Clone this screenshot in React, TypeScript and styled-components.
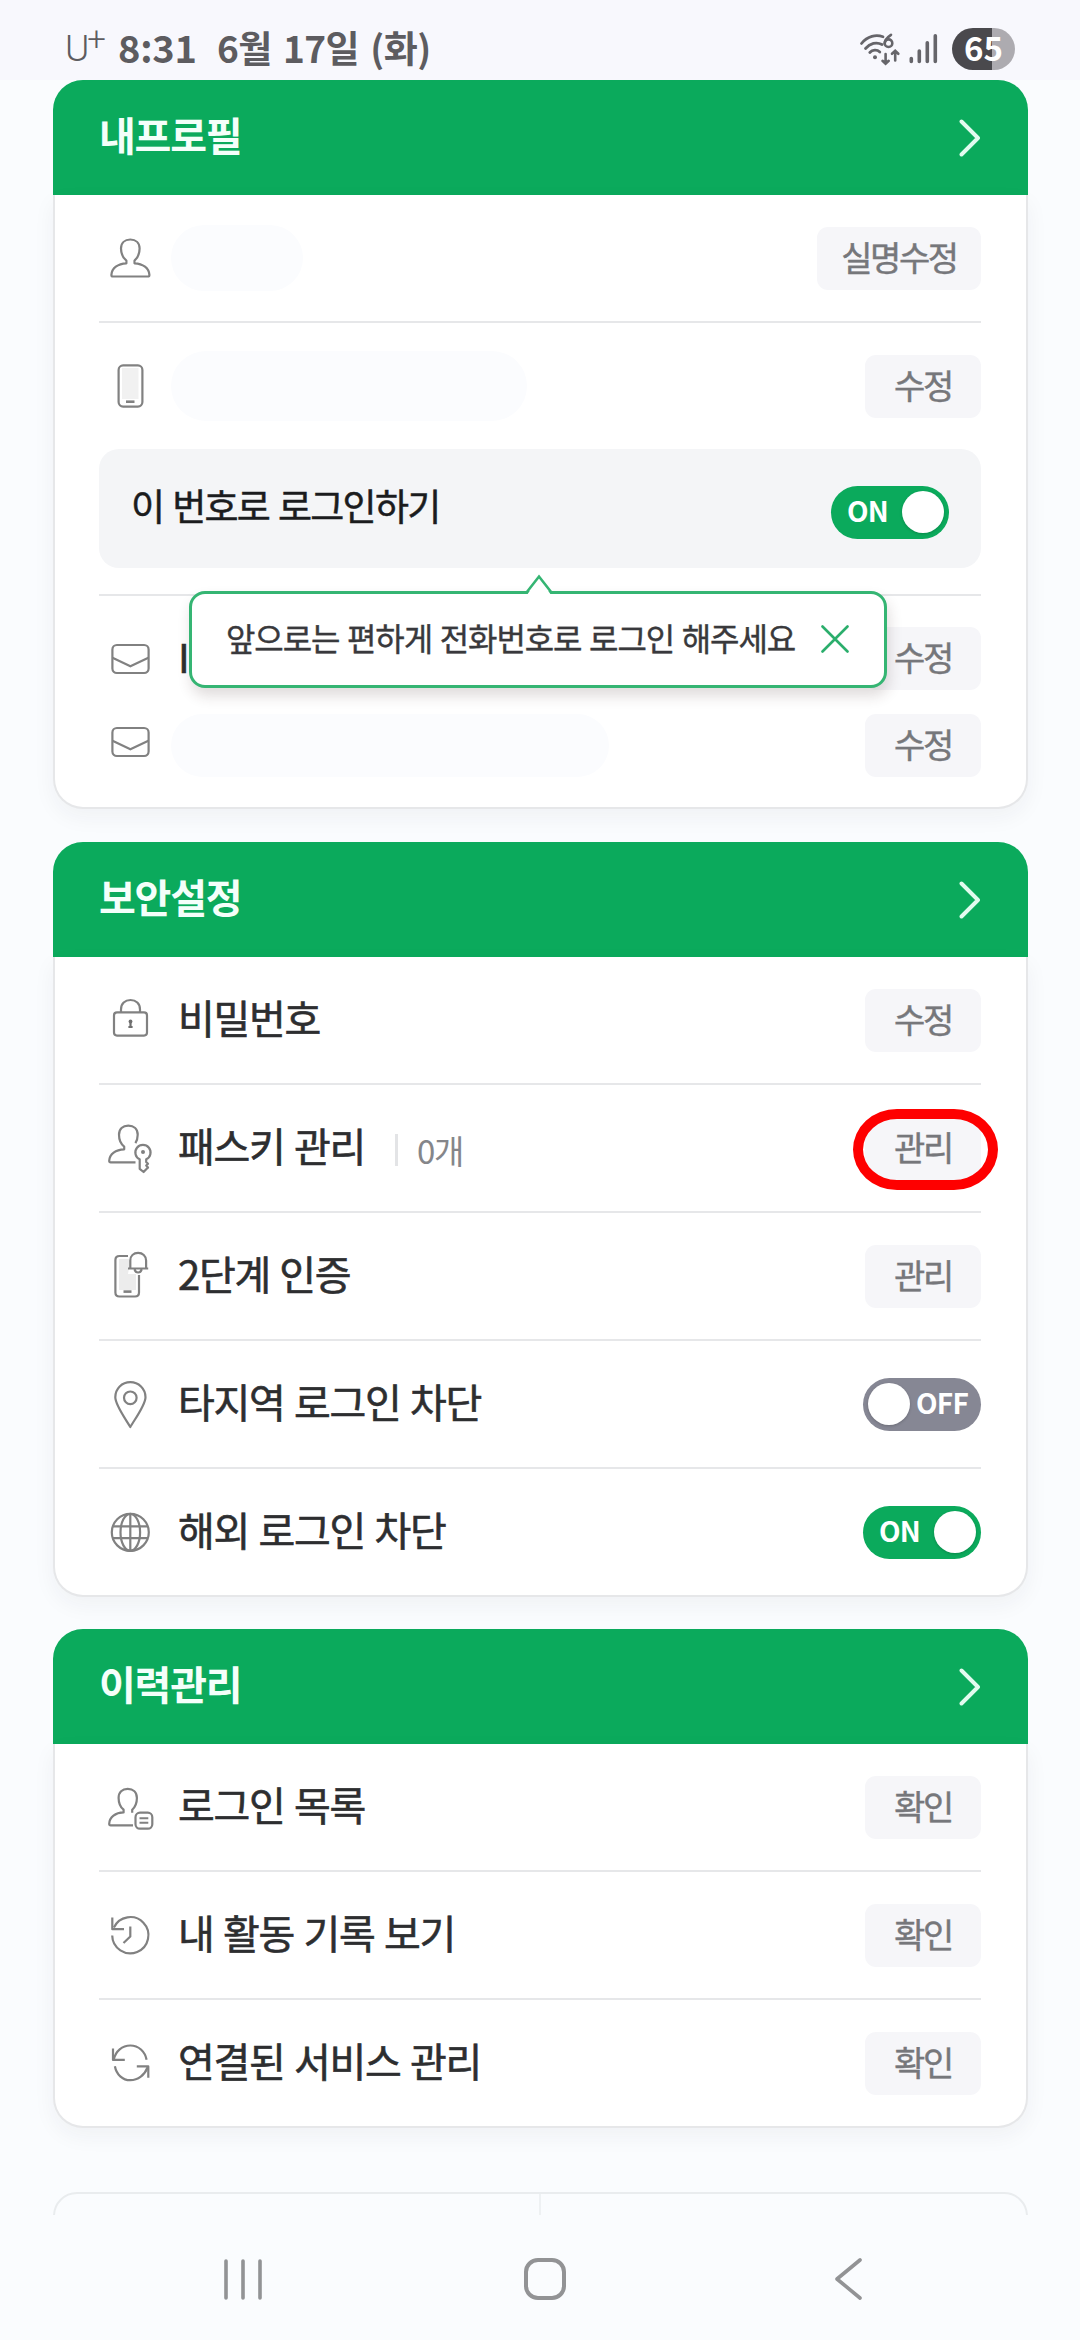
import React from "react";
import styled, { createGlobalStyle } from "styled-components";

const GREEN = "#0baa5c";
const LINE = "#e6e7e9";

const GlobalStyle = createGlobalStyle`
  * { box-sizing: border-box; }
  html, body { margin: 0; padding: 0; background: #fafcfe; }
  body { font-family: "Noto Sans CJK KR", "Noto Sans", sans-serif; }
`;

const Screen = styled.div`
  width: 1080px;
  height: 2340px;
  overflow: hidden;
  display: flex;
  flex-direction: column;
  background: #fafcfe;
`;

/* ---------- status bar ---------- */

const StatusBar = styled.header`
  height: 80px;
  flex: none;
  display: flex;
  align-items: center;
  justify-content: space-between;
  padding: 17px 65px 0 65px;
  background: #f8f8fd;
  color: #5d5c60;
`;

const StatusLeft = styled.div`
  display: flex;
  align-items: center;
  height: 60px;
  margin-bottom: 3px;
`;

const Carrier = styled.span`
  display: flex;
  width: 53px;
  padding-top: 3px;
  font-family: Roboto, sans-serif;
  font-weight: 300;
  font-size: 37px;
  line-height: 60px;
`;

const CarrierPlus = styled.span`
  font-size: 33px;
  line-height: 40px;
  margin-left: -2px;
`;

const Clock = styled.span`
  width: 99px;
  font-weight: 700;
  font-size: 38px;
  line-height: 60px;
  letter-spacing: -0.2px;
`;

const DateText = styled(Clock)`
  width: auto;
  font-size: 37px;
  letter-spacing: -0.6px;
  word-spacing: 3.6px;
`;

const StatusRight = styled.div`
  display: flex;
  align-items: center;
  height: 42px;
`;

const SignalGap = styled.span`
  width: 7px;
`;

const Battery = styled.div`
  display: flex;
  align-items: center;
  justify-content: center;
  width: 63px;
  height: 42px;
  margin-left: 14px;
  padding-bottom: 3px;
  border-radius: 21px;
  background: linear-gradient(90deg, #4a494d 0 40px, #adabb0 40px 100%);
  color: #fff;
  font-weight: 700;
  font-size: 33px;
  line-height: 38px;
`;

/* ---------- cards ---------- */

const List = styled.main`
  flex: none;
  height: 2135px;
  overflow: hidden;
  display: flex;
  flex-direction: column;
  padding: 0 52px 0 53px;
`;

const Card = styled.section<{ $gap: number }>`
  flex: none;
  margin-bottom: ${(p) => p.$gap}px;
  border-radius: 30px;
`;

const CardHeader = styled.div`
  display: flex;
  align-items: center;
  justify-content: space-between;
  height: 115px;
  padding: 0 47px 0 46px;
  border-radius: 30px 30px 0 0;
  background: ${GREEN};
`;

const CardTitle = styled.h2`
  margin: 0 0 7px;
  color: #f4fffa;
  font-size: 40px;
  font-weight: 700;
  line-height: 60px;
  letter-spacing: -1.2px;
`;

const CardBody = styled.div`
  padding: 0 45px 0 44px;
  border: 2px solid ${LINE};
  border-top: 0;
  border-radius: 0 0 30px 30px;
  background: #fff;
  box-shadow: 0 8px 22px rgba(30, 40, 60, 0.05);
`;

const Row = styled.div<{ $h?: number; $last?: boolean }>`
  display: flex;
  align-items: center;
  height: ${(p) => p.$h ?? 128}px;
  border-bottom: ${(p) => (p.$last ? "0" : `2px solid ${LINE}`)};
`;

const IconSlot = styled.span<{ $lift?: number }>`
  display: flex;
  justify-content: center;
  width: 62px;
  margin-bottom: ${(p) => p.$lift ?? 0}px;
  svg { display: block; overflow: visible; }
`;

const Label = styled.span`
  margin: 0 0 6px 17px;
  color: #2d2e30;
  font-size: 40px;
  font-weight: 400;
  -webkit-text-stroke: 0.6px #2d2e30;
  line-height: 60px;
  letter-spacing: -1.3px;
  word-spacing: 1.8px;
  white-space: nowrap;
`;

const Redacted = styled.span<{ $w: number; $h: number }>`
  width: ${(p) => p.$w}px;
  height: ${(p) => p.$h}px;
  margin-left: 10px;
  border-radius: 36px;
  background: #fbfcfe;
`;

const Count = styled.span`
  display: flex;
  align-items: center;
  margin-left: 30px;
  padding-top: 4px;
  color: #85868a;
  font-size: 33px;
  font-weight: 400;
  line-height: 32px;
  letter-spacing: -1.3px;
  &::before {
    content: "";
    width: 3px;
    height: 32px;
    margin-right: 19px;
    background: #e3e4e6;
  }
`;

const Spacer = styled.span`
  flex: 1;
`;

const Button = styled.button<{ $wide?: boolean }>`
  position: relative;
  width: ${(p) => (p.$wide ? 164 : 116)}px;
  height: 63px;
  padding: 0 0 3px;
  border: 0;
  border-radius: 11px;
  background: #f6f6f9;
  color: #76777b;
  font-family: inherit;
  font-size: 34px;
  font-weight: 400;
  -webkit-text-stroke: 0.45px #76777b;
  line-height: 58px;
  letter-spacing: -2.4px;
  text-align: center;
  white-space: nowrap;
`;

const Ring = styled.span`
  position: absolute;
  left: -12px;
  top: -8px;
  width: 145px;
  height: 81px;
  border: 10px solid #fe0000;
  border-radius: 44px / 40.5px;
`;

const Toggle = styled.span<{ $on: boolean }>`
  display: flex;
  align-items: center;
  justify-content: space-between;
  flex-direction: ${(p) => (p.$on ? "row" : "row-reverse")};
  width: 118px;
  height: 53px;
  padding: ${(p) => (p.$on ? "0 5px 0 16px" : "0 13px 0 5px")};
  border-radius: 27px;
  background: ${(p) => (p.$on ? GREEN : "#868794")};
  color: #fff;
  font-size: 28px;
  font-weight: 700;
  line-height: 48px;
  letter-spacing: -0.8px;
`;

const ToggleText = styled.span`
  padding-bottom: 5px;
`;

const Knob = styled.span`
  width: 42px;
  height: 42px;
  border-radius: 50%;
  background: #fff;
  box-shadow: 0 1px 3px rgba(0, 0, 0, 0.2);
`;

const LoginBlock = styled.div`
  padding-bottom: 26px;
  border-bottom: 2px solid ${LINE};
`;

const LoginBox = styled.div`
  position: relative;
  display: flex;
  align-items: center;
  justify-content: space-between;
  height: 119px;
  padding: 7px 32px 0 32px;
  border-radius: 20px;
  background: #f4f5f7;
`;

const LoginLabel = styled.span`
  margin-bottom: 14px;
  color: #1b1c1e;
  font-size: 37px;
  -webkit-text-stroke: 0.5px #1b1c1e;
  line-height: 56px;
  letter-spacing: -1.7px;
  word-spacing: 2.2px;
`;

const Tooltip = styled.div`
  position: absolute;
  z-index: 2;
  left: 90px;
  top: 142px;
  width: 698px;
  height: 97px;
  display: flex;
  align-items: center;
  padding: 0 0 0 34px;
  border: 3px solid #35b573;
  border-radius: 16px;
  background: #fff;
  box-shadow: 2px 8px 14px rgba(60, 40, 40, 0.16);
  > svg { display: block; margin-bottom: 2px; }
`;

const TooltipText = styled.span`
  width: 595px;
  margin-bottom: 5px;
  color: #39393c;
  font-size: 32px;
  -webkit-text-stroke: 0.4px #39393c;
  line-height: 48px;
  letter-spacing: -1.1px;
  word-spacing: 1.6px;
  white-space: nowrap;
`;

const Arrow = styled.span`
  position: absolute;
  left: 333px;
  top: -20px;
  width: 28px;
  height: 21px;
  svg { display: block; }
`;

const MailGroup = styled.div`
  display: flex;
  flex-direction: column;
  gap: 24px;
  padding: 31px 0 30px;
`;

const SplitCard = styled.section`
  display: grid;
  grid-template-columns: 1fr 1fr;
  flex: none;
  height: 90px;
  border: 2px solid #e9ecee;
  border-radius: 24px;
`;

const SplitCell = styled.div`
  &:first-child { border-right: 2px solid #eef1f3; }
`;

const NavBar = styled.nav`
  flex: 1;
  display: flex;
  align-items: flex-start;
  justify-content: space-between;
  padding: 42px 217px 0 222px;
  background: #fafcfe;
  svg { display: block; }
`;

const HomeKey = styled.span`
  margin-right: 7px;
`;

/* ---------- icons ---------- */

const Icon = ({ children }: { children: React.ReactNode }) => (
  <svg width="48" height="48" viewBox="0 0 48 48" fill="none" stroke="#818181" strokeWidth="2.2" strokeLinejoin="round">
    {children}
  </svg>
);

const UserIcon = () => (
  <Icon>
    <path d="M20.4 29.3V26.6C16.8 23.8 15 19 15 14.6 15 9 18.7 5.5 24.3 5.5s9.3 3.5 9.3 9.1c0 4.4-1.8 9.2-5.1 12v2.7C37 29.6 43 34.2 43.4 40.9q0 1.6-1.6 1.6H7q-1.6 0-1.6-1.6C5.8 34.2 11.8 29.6 20.4 29.3z" />
  </Icon>
);

const PhoneIcon = () => (
  <Icon>
    <rect x="16" y="6" width="16.5" height="31" fill="#f1f1f1" stroke="none" />
    <rect x="12.6" y="3.4" width="23.8" height="41.2" rx="4.5" />
    <path d="M20 39.7h8.5" strokeWidth="2.6" />
  </Icon>
);

const MailIcon = () => (
  <Icon>
    <rect x="6.4" y="10" width="36.2" height="28" rx="4.5" />
    <path d="M6.5 22.8l17.9 8.5 18-8.5" />
  </Icon>
);

const LockIcon = () => (
  <Icon>
    <rect x="8" y="16.4" width="33" height="23.2" rx="3" />
    <path d="M15 16.4v-3C15 7.7 19 4 24.5 4S34 7.7 34 13.4v3" />
    <circle cx="24.5" cy="25.5" r="1.9" fill="#6f6f6f" stroke="none" />
    <path d="M24.5 25.5v6M22.4 31h4.2" stroke="#6f6f6f" />
  </Icon>
);

const PasskeyIcon = () => (
  <Icon>
    <path d="M29.5 38.4H4.8q-1.6 0-1.6-1.6C3.6 30.1 9.6 25.6 18.2 25.3V22.6C14.6 19.8 13 15.2 13 10.8 13 5 16.7 1.6 22.3 1.6s9.4 3.4 9.4 9.2c0 3-.8 6-2.3 8.4" />
    <path d="M33.7 35.3A7.6 7.6 0 1 1 40.2 35.3V38l1.8 1.8-1.8 1.8 1.8 2-1.8 1.600-2.600 2.800-3.900-3.200z" />
    <circle cx="37" cy="28" r="2" fill="#818181" stroke="none" />
  </Icon>
);

const TwoStepIcon = () => (
  <Icon>
    <path d="M13 7h10v9l-1 6h8v16H13z" fill="#ececec" stroke="none" />
    <path d="M22 4H13.5Q9.4 4 9.4 8v32.5q0 4 4 4H29q4 0 4-4V23" />
    <path d="M17.5 39.6h8" strokeWidth="2.6" />
    <path d="M22 16.5H42.2M24.3 16.5V8.5C24.3 3.8 27.6.9 32.1.9s8 2.9 8 7.6v8M28.6 17.500q.7 3 3.500 3t3.500-3" fill="#fff" />
  </Icon>
);

const PinIcon = () => (
  <Icon>
    <path d="M24.3 47C20 39.5 9.3 25 9.3 17.2 9.3 8.6 16 2.1 24.3 2.1s15.2 6.5 15.2 15.1C39.5 25 28.6 39.5 24.3 47z" />
    <circle cx="24.3" cy="17.8" r="6.3" />
  </Icon>
);

const GlobeIcon = () => (
  <Icon>
    <circle cx="24.3" cy="24.3" r="18.5" />
    <ellipse cx="24.3" cy="24.3" rx="9.8" ry="18.5" />
    <path d="M24.3 6v37M7 18.3h34.6M7 30.2h34.6" />
  </Icon>
);

const UserListIcon = () => (
  <Icon>
    <path d="M27 42.3H4.8q-1.6 0-1.6-1.6C3.6 34 9.4 29.7 17.6 29.4V26.7C14.2 23.9 12.6 19.3 12.6 14.9c0-5.6 3.6-9 9.1-9s9.2 3.4 9.2 9c0 4.4-1.7 9-4.7 11.8v3" />
    <rect x="29.5" y="29.7" width="16.8" height="16" rx="4.5" />
    <path d="M33.5 35.2h8.8M33.5 39.8h8.8" strokeWidth="1.9" />
  </Icon>
);

const HistoryIcon = () => (
  <Icon>
    <path d="M6.2 24.5A18.1 18.1 0 1 0 7.900 16.500" />
    <path d="M6.3 6.5V18.2H18" />
    <path d="M24.3 15.5V25.5L17.5 32" />
  </Icon>
);

const SyncIcon = () => (
  <Icon>
    <path d="M7.8 20.5C9.5 12 16.3 6.5 24.3 6.5 32.6 6.5 39 12.5 40.6 20.8" />
    <path d="M7 9.5V20.9H18.8" />
    <path d="M8.900 27.200C10.400 35.500 16.600 41.200 24.300 41.200S38.700 36 41.800 28" />
    <path d="M30.8 27.4H42.3V38.8" />
  </Icon>
);

const Chevron = () => (
  <svg width="22" height="40" viewBox="0 0 22 40" fill="none" stroke="#e2fbef" strokeWidth="3.9" strokeLinecap="round" strokeLinejoin="round">
    <path d="M2.500 3.500L19 20 2.500 36.500" />
  </svg>
);

const WifiIcon = () => (
  <svg width="44" height="34" viewBox="0 0 44 34" fill="none" stroke="#66656a" strokeWidth="2.8" strokeLinecap="round">
    <path d="M3.5 11.5C9.5 4 18 2.3 25 4.8M7.5 16.5C12 11.3 18.5 9.5 24 12.5M11.8 20.5C14.5 17.600 19 17.300 21.800 20" />
    <circle cx="17" cy="25.2" r="2" fill="#66656a" stroke="none" />
    <path d="M33 2.8C29 5.5 26.7 8 26.7 11.5" strokeWidth="2.6" />
    <circle cx="30.5" cy="11.2" r="3.8" strokeWidth="2.6" />
    <path d="M27.6 22v9.5M24.5 28.8l3.1 3 3.1-3M37.2 28.5V19M34 21.8l3.2-3 3.1 3" strokeWidth="2.6" />
  </svg>
);

const SignalIcon = () => (
  <svg width="29" height="32" viewBox="0 0 29 32" fill="none" stroke="#66656a" strokeWidth="3.6" strokeLinecap="round">
    <path d="M2.3 25.5v3M10.3 18v10.5M18.3 9.800v18.700M26.300 2.800v25.700" />
  </svg>
);

/* ---------- content ---------- */

type Item = {
  icon: React.ReactNode;
  label: string;
  count?: string;
  action?: string;
  ringed?: boolean;
  on?: boolean;
};

const Switch = ({ on }: { on: boolean }) => (
  <Toggle $on={on}>
    <ToggleText>{on ? "ON" : "OFF"}</ToggleText>
    <Knob />
  </Toggle>
);

const Header = ({ title }: { title: string }) => (
  <CardHeader>
    <CardTitle>{title}</CardTitle>
    <Chevron />
  </CardHeader>
);

const ItemCard = ({ title, items, gap }: { title: string; items: Item[]; gap: number }) => (
  <Card $gap={gap}>
    <Header title={title} />
    <CardBody>
      {items.map((it, i) => {
        const last = i === items.length - 1;
        return (
          <Row key={it.label} $last={last} $h={last ? 126 : 128}>
            <IconSlot>{it.icon}</IconSlot>
            <Label>{it.label}</Label>
            {it.count && <Count>{it.count}</Count>}
            <Spacer />
            {it.action ? (
              <Button>
                {it.action}
                {it.ringed && <Ring />}
              </Button>
            ) : (
              <Switch on={!!it.on} />
            )}
          </Row>
        );
      })}
    </CardBody>
  </Card>
);

const security: Item[] = [
  { icon: <LockIcon />, label: "비밀번호", action: "수정" },
  { icon: <PasskeyIcon />, label: "패스키 관리", count: "0개", action: "관리", ringed: true },
  { icon: <TwoStepIcon />, label: "2단계 인증", action: "관리" },
  { icon: <PinIcon />, label: "타지역 로그인 차단", on: false },
  { icon: <GlobeIcon />, label: "해외 로그인 차단", on: true },
];

const history: Item[] = [
  { icon: <UserListIcon />, label: "로그인 목록", action: "확인" },
  { icon: <HistoryIcon />, label: "내 활동 기록 보기", action: "확인" },
  { icon: <SyncIcon />, label: "연결된 서비스 관리", action: "확인" },
];

export default function App() {
  return (
    <Screen>
      <GlobalStyle />
      <StatusBar>
        <StatusLeft>
          <Carrier>
            U<CarrierPlus>+</CarrierPlus>
          </Carrier>
          <Clock>8:31</Clock>
          <DateText>6월 17일 (화)</DateText>
        </StatusLeft>
        <StatusRight>
          <WifiIcon />
          <SignalGap />
          <SignalIcon />
          <Battery>65</Battery>
        </StatusRight>
      </StatusBar>

      <List>
        <Card $gap={33}>
          <Header title="내프로필" />
          <CardBody>
            <Row>
              <IconSlot><UserIcon /></IconSlot>
              <Redacted $w={132} $h={66} />
              <Spacer />
              <Button $wide>실명수정</Button>
            </Row>
            <Row $h={126} $last>
              <IconSlot><PhoneIcon /></IconSlot>
              <Redacted $w={356} $h={70} />
              <Spacer />
              <Button>수정</Button>
            </Row>
            <LoginBlock>
              <LoginBox>
                <LoginLabel>이 번호로 로그인하기</LoginLabel>
                <Switch on />
                <Tooltip>
                  <Arrow>
                    <svg width="28" height="21" viewBox="0 0 28 21">
                      <path d="M2 21L14 3l12 18z" fill="#fff" />
                      <path d="M1.5 18.5L14 2.5l12.5 16" fill="none" stroke="#35b573" strokeWidth="2.6" />
                    </svg>
                  </Arrow>
                  <TooltipText>앞으로는 편하게 전화번호로 로그인 해주세요</TooltipText>
                  <svg width="28" height="28" viewBox="0 0 28 28" stroke="#2bae6c" strokeWidth="2.6" strokeLinecap="round">
                    <path d="M1.5 1.5l25 25M26.5 1.5l-25 25" />
                  </svg>
                </Tooltip>
              </LoginBox>
            </LoginBlock>
            <MailGroup>
              <Row $h={63} $last>
                <IconSlot><MailIcon /></IconSlot>
                <Label>I</Label>
                <Spacer />
                <Button>수정</Button>
              </Row>
              <Row $h={63} $last>
                <IconSlot $lift={7}><MailIcon /></IconSlot>
                <Redacted $w={438} $h={63} />
                <Spacer />
                <Button>수정</Button>
              </Row>
            </MailGroup>
          </CardBody>
        </Card>

        <ItemCard title="보안설정" items={security} gap={32} />
        <ItemCard title="이력관리" items={history} gap={64} />

        <SplitCard>
          <SplitCell />
          <SplitCell />
        </SplitCard>
      </List>

      <NavBar>
        <svg width="42" height="44" viewBox="0 0 42 44" stroke="#929395" strokeWidth="3.6" strokeLinecap="round">
          <path d="M4 4v37M21 4v37M38 4v37" />
        </svg>
        <HomeKey>
          <svg width="44" height="44" viewBox="0 0 44 44" fill="none" stroke="#929395" strokeWidth="4">
            <rect x="3" y="3" width="38" height="38" rx="12" />
          </svg>
        </HomeKey>
        <svg width="30" height="44" viewBox="0 0 30 44" fill="none" stroke="#929395" strokeWidth="3.6" strokeLinecap="round" strokeLinejoin="round">
          <path d="M27 3L4 22l23 19" />
        </svg>
      </NavBar>
    </Screen>
  );
}
